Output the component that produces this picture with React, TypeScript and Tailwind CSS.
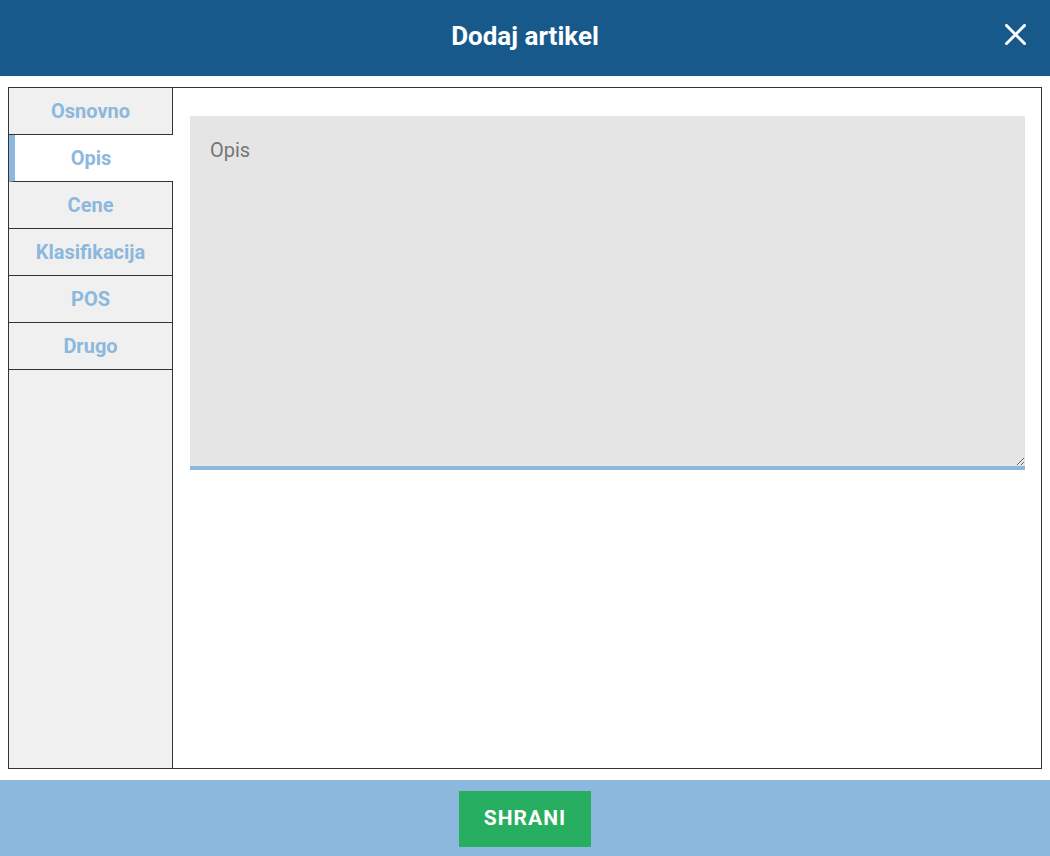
import React from "react";

const tabs = ["Osnovno", "Opis", "Cene", "Klasifikacija", "POS", "Drugo"];

export default function App() {
  const active = "Opis";
  return (
    <div
      className="flex h-[856px] w-full flex-col bg-white"
      style={{ fontFamily: "Roboto, 'Liberation Sans', sans-serif" }}
    >
      <header className="relative flex h-[76px] shrink-0 items-center justify-center bg-[#17598b] pb-[4px]">
        <h1 className="text-[26px] font-bold text-white">Dodaj artikel</h1>
        <button className="absolute right-[24px] top-[24px] flex h-[21px] w-[21px] items-center justify-center">
          <svg width="21" height="21" viewBox="0 0 21 21" fill="none">
            <path d="M1.5 1.5 L19.5 19.5 M19.5 1.5 L1.5 19.5" stroke="white" strokeWidth="3" strokeLinecap="square" />
          </svg>
        </button>
      </header>

      <main className="flex flex-1 px-[8px] py-[11px]">
        <div className="flex flex-1 border border-[#333]">
          <nav className="flex w-[164px] shrink-0 flex-col bg-[#f0f0f0]">
            {tabs.map((t) => {
              const isActive = t === active;
              return (
                <div
                  key={t}
                  className={
                    isActive
                      ? "flex h-[47px] shrink-0 items-center justify-center border-b border-l-[6px] border-[#333] border-l-[#8cb8de] bg-white pr-[6px] text-[20px] font-bold text-[#8cb8de]"
                      : "flex h-[47px] shrink-0 items-center justify-center border-b border-r border-[#333] text-[20px] font-bold text-[#8cb8de]"
                  }
                >
                  {t}
                </div>
              );
            })}
            <div className="flex-1 border-r border-[#333]" />
          </nav>
          <section className="flex-1 pl-[17px] pr-[16px] pt-[28px]">
            <textarea
              placeholder="Opis"
              className="block h-[354px] w-full border-b-4 border-[#8cb8de] bg-[#e5e5e5] px-[20px] pt-[21px] text-[20px] leading-[27px] text-[#333] outline-none placeholder:text-[#757575]"
            />
          </section>
        </div>
      </main>

      <footer className="flex h-[76px] shrink-0 justify-center bg-[#8cb8de] pt-[11px]">
        <button className="h-[56px] w-[132px] bg-[#27ae60] text-[21px] font-bold tracking-[1px] text-white">
          SHRANI
        </button>
      </footer>
    </div>
  );
}
